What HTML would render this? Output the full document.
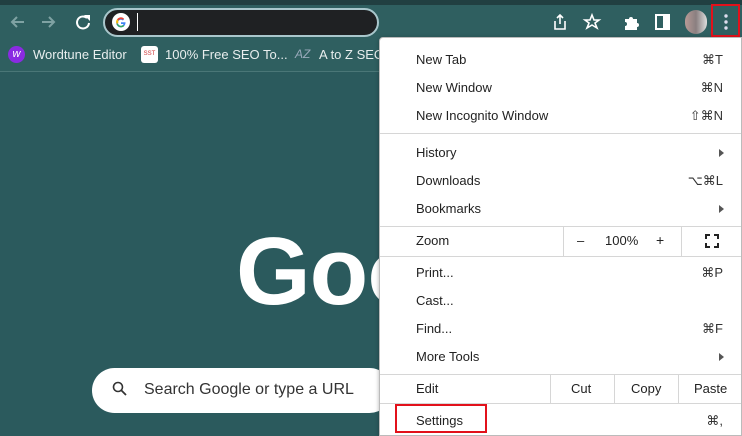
<!DOCTYPE html>
<html><head><meta charset="utf-8"><style>
*{margin:0;padding:0;box-sizing:border-box}
body{width:742px;height:436px;overflow:hidden;background:#2b5a5d;font-family:"Liberation Sans",sans-serif;position:relative}
.abs{position:absolute}
.top{left:0;top:0;width:742px;height:6px;background:#213f41}
.tb{left:0;top:5px;width:742px;height:34px;background:#2f5f60}
.bm{left:0;top:39px;width:742px;height:33px;background:#2f5f60;border-bottom:1px solid #4a7677}
.addr{left:103px;top:8px;width:276px;height:29px;background:#1f2123;border:2px solid #a9c7cc;border-radius:15px}
.bmt{color:#e8eeee;font-size:13px;top:47px}
.menu{left:379px;top:37px;width:363px;height:399px;background:#fff;border:1px solid #bbb;border-radius:4px 0 0 0;box-shadow:0 1px 4px rgba(0,0,0,.3)}
.it{position:absolute;left:36px;font-size:13px;color:#222}
.sc{position:absolute;right:18px;font-size:13px;color:#333}
.sep{position:absolute;left:0;right:0;height:1px;background:#d6d6d6}
.vl{position:absolute;width:1px;background:#d6d6d6}
.arr{position:absolute;right:17px;width:0;height:0;border-left:5px solid #555;border-top:4px solid transparent;border-bottom:4px solid transparent}
</style></head><body>
<div class="abs top"></div>
<div class="abs tb"></div>
<div class="abs bm"></div>
<svg class="abs" style="left:8px;top:12px" width="90" height="20" viewBox="0 0 90 20">
<path d="M16 10H4M9 5L4 10l5 5" stroke="#7fa2a3" stroke-width="2" fill="none"/>
<path d="M34 10h12M41 5l5 5-5 5" stroke="#7fa2a3" stroke-width="2" fill="none"/>
<path d="M79 6a6 6 0 1 0 2 5" stroke="#fff" stroke-width="2" fill="none"/><path d="M76 3h6v6z" fill="#fff"/>
</svg>
<div class="abs addr"></div>
<svg class="abs" style="left:112px;top:13px" width="18" height="18" viewBox="0 0 18 18"><circle cx="9" cy="9" r="9" fill="#fff"/>
<path d="M13.5 9.3H9v1.7h2.6a3 3 0 1 1-.7-3.5l1.2-1.2A4.7 4.7 0 1 0 13.5 9.3z" fill="#4285f4"/>
<path d="M5 6.3a4.7 4.7 0 0 1 7.1-.7l-1.2 1.2A3 3 0 0 0 6.4 7.5z" fill="#ea4335"/>
<path d="M4.6 11a4.7 4.7 0 0 0 7.7 2l-1.3-1a3 3 0 0 1-5-1.3z" fill="#34a853"/>
<path d="M4.6 11a4.7 4.7 0 0 1 .4-4.7l1.4 1.2a3 3 0 0 0 0 2.2z" fill="#fbbc05"/></svg>
<div class="abs" style="left:137px;top:13px;width:1px;height:18px;background:#fff"></div>
<svg class="abs" style="left:552px;top:13px" width="50" height="18" viewBox="0 0 50 18">
<path d="M3 8v8h10V8M8 2v9M5 5l3-3 3 3" stroke="#fff" stroke-width="1.6" fill="none"/>
<path d="M40 2l2 5h5l-4 3 2 5-5-3-5 3 2-5-4-3h5z" stroke="#fff" stroke-width="1.6" fill="none"/></svg>
<svg class="abs" style="left:623px;top:13px" width="60" height="18" viewBox="0 0 60 18">
<path d="M2 6h4a2 2 0 1 1 4 0h4v4a2 2 0 1 1 0 4v3H2v-4a2 2 0 1 0 0-4z" fill="#fff"/>
<rect x="33" y="2" width="13" height="14" stroke="#fff" stroke-width="2" fill="none"/><rect x="40" y="2" width="6" height="14" fill="#fff"/></svg>
<div class="abs" style="left:685px;top:10px;width:22px;height:24px;border-radius:11px;background:linear-gradient(90deg,#b79a96,#8a7f80,#ddd)"></div>
<div class="abs" style="left:711px;top:4px;width:29px;height:33px;border:2px solid #e2111b"></div>
<svg class="abs" style="left:722px;top:13px" width="8" height="18"><circle cx="4" cy="3" r="1.7" fill="#dde"/><circle cx="4" cy="9" r="1.7" fill="#dde"/><circle cx="4" cy="15" r="1.7" fill="#dde"/></svg>
<div class="abs" style="left:8px;top:46px;width:17px;height:17px;border-radius:50%;background:#8a2be2;color:#fff;font-size:11px;text-align:center;line-height:17px;font-style:italic">w</div>
<div class="abs bmt" style="left:33px">Wordtune Editor</div>
<div class="abs" style="left:141px;top:46px;width:17px;height:17px;border-radius:3px;background:#fff;color:#c33;font-size:6px;text-align:center;line-height:17px">SST</div>
<div class="abs bmt" style="left:165px">100% Free SEO To...</div>
<div class="abs" style="left:295px;top:47px;color:#9ab;font-size:12px;font-style:italic">AZ</div>
<div class="abs bmt" style="left:319px">A to Z SEO</div>
<div class="abs" style="left:236px;top:222px;color:#fff;font-size:96px;font-weight:bold;line-height:100px;letter-spacing:-1px">Goo</div>
<div class="abs" style="left:92px;top:368px;width:300px;height:45px;background:#fff;border-radius:23px"></div>
<svg class="abs" style="left:112px;top:381px" width="16" height="16"><circle cx="6" cy="6" r="4.5" stroke="#333" stroke-width="1.6" fill="none"/><path d="M9.5 9.5l4.5 4.5" stroke="#333" stroke-width="1.8"/></svg>
<div class="abs" style="left:144px;top:381px;font-size:16px;color:#333">Search Google or type a URL</div>
<div class="abs menu">
<div class="it" style="top:14px">New Tab</div><div class="sc" style="top:14px">⌘T</div>
<div class="it" style="top:42px">New Window</div><div class="sc" style="top:42px">⌘N</div>
<div class="it" style="top:70px">New Incognito Window</div><div class="sc" style="top:70px">⇧⌘N</div>
<div class="sep" style="top:95px"></div>
<div class="it" style="top:107px">History</div><div class="arr" style="top:111px"></div>
<div class="it" style="top:135px">Downloads</div><div class="sc" style="top:135px">⌥⌘L</div>
<div class="it" style="top:163px">Bookmarks</div><div class="arr" style="top:167px"></div>
<div class="sep" style="top:188px"></div>
<div class="it" style="top:195px">Zoom</div>
<div class="vl" style="left:183px;top:188px;height:30px"></div>
<div style="position:absolute;left:197px;top:195px;font-size:13px;color:#222">–</div>
<div style="position:absolute;left:225px;top:195px;font-size:13px;color:#222">100%</div>
<div style="position:absolute;left:276px;top:194px;font-size:14px;color:#222">+</div>
<div class="vl" style="left:301px;top:188px;height:30px"></div>
<svg style="position:absolute;left:325px;top:196px" width="14" height="14"><path d="M1 5V1h4M9 1h4v4M13 9v4H9M5 13H1V9" stroke="#222" stroke-width="2" fill="none"/></svg>
<div class="sep" style="top:218px"></div>
<div class="it" style="top:227px">Print...</div><div class="sc" style="top:227px">⌘P</div>
<div class="it" style="top:255px">Cast...</div>
<div class="it" style="top:283px">Find...</div><div class="sc" style="top:283px">⌘F</div>
<div class="it" style="top:311px">More Tools</div><div class="arr" style="top:315px"></div>
<div class="sep" style="top:336px"></div>
<div class="it" style="top:343px">Edit</div>
<div class="vl" style="left:170px;top:336px;height:29px"></div>
<div style="position:absolute;left:191px;top:343px;font-size:13px;color:#222">Cut</div>
<div class="vl" style="left:234px;top:336px;height:29px"></div>
<div style="position:absolute;left:251px;top:343px;font-size:13px;color:#222">Copy</div>
<div class="vl" style="left:298px;top:336px;height:29px"></div>
<div style="position:absolute;left:314px;top:343px;font-size:13px;color:#222">Paste</div>
<div class="sep" style="top:365px"></div>
<div class="it" style="top:375px">Settings</div><div class="sc" style="top:375px">⌘,</div>
<div style="position:absolute;left:15px;top:366px;width:92px;height:29px;border:2px solid #e2111b"></div>
</div>
</body></html>
